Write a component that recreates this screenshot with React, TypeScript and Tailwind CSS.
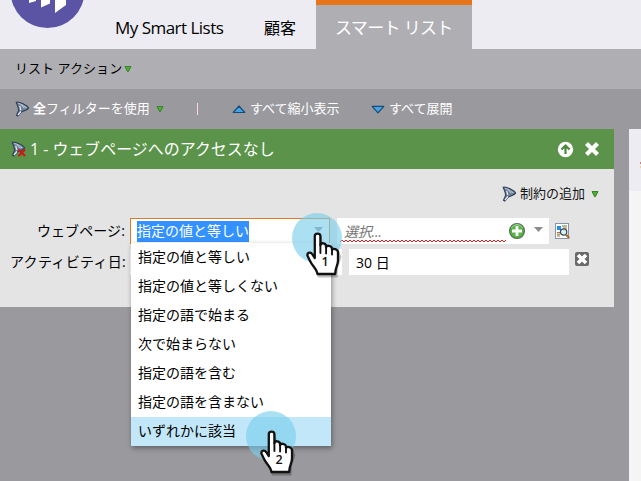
import React from "react";

const FONT = "font-['Open_Sans','Noto_Sans_CJK_JP',sans-serif]";

function Funnel({ cross = false }: { cross?: boolean }) {
  return (
    <svg width="15" height="16" viewBox="0 0 15 16" className="shrink-0">
      <path d="M1.2 1.2 C4 .2 12.5 4.5 13.6 7 C13 9 9 9.5 6.5 11 L2.8 15 L1.5 14.2 L3.6 9.5 C3.6 6 2 4 1.2 1.2Z" fill="#6c7d93" stroke="#2d3f56" strokeWidth="1.1" />
      <path d="M2.4 1.8 C6 2.3 10 5 12 7 L8 7.6 C7.5 5.5 5 4 2.4 1.8Z" fill="#c3d0e0" />
      <path d="M4.7 4.8 L5.8 9 M3 14 L6 10.5" stroke="#e5ebf3" strokeWidth="1.2" />
      <path d="M5 3.2 L9 8 M8 4.6 L10.5 7.5" stroke="#52667e" strokeWidth=".6" />
      {cross && <path d="M7.5 8.5 L14 15 M14 8.5 L7.5 15" stroke="#cf1717" strokeWidth="2.2" />}
    </svg>
  );
}

function GreenArrow() {
  return (
    <svg width="8" height="8" viewBox="0 0 8 8" className="shrink-0">
      <path d="M1 1.5 H7 L4.3 6.8 H3.7Z" fill="#4fae31" stroke="#38832a" strokeWidth="1" />
    </svg>
  );
}

function BlueArrow({ up = false }: { up?: boolean }) {
  return (
    <svg width="14" height="9" viewBox="0 0 14 9" className="shrink-0">
      <path d={up ? "M7 1 L12.8 7.5 H1.2Z" : "M1.2 1.3 H12.8 L7 7.8Z"} fill="#45a5e4" stroke="#164d78" strokeWidth="1.2" strokeLinejoin="round" />
    </svg>
  );
}

function Pointer({ n }: { n: number }) {
  return (
    <svg width="50" height="66" viewBox="0 0 50 66">
      <circle cx="25" cy="25" r="25" fill="#78cdeb" fillOpacity=".62" />
      <path d="M16.5 43 L24 37 L23 22 H28.5 L30 31 L46 37 L48.5 43 L45 54 L44.5 63.5 H25Z" fill="#000" opacity=".25" transform="translate(1 1)" />
      <path
        d="M22.8 42.5 V23.3 C22.8 19.8 28.4 19.8 28.4 23.3 V32.2 C28.8 29.5 33.7 29.6 34 32.8 V34.3 C34.5 31.9 39.5 32.3 40 35.5 V37 C40.8 35 46 35.8 46 39.5 V47.5 C46 52 43.4 53.5 43.2 61 H25.4 C25.2 56 20.5 53.5 17.8 47.5 L15.4 42.5 C15.2 39.3 18.6 38.6 20.4 41.4 L22.8 45Z"
        fill="#fff" stroke="#111" strokeWidth="2.3" strokeLinejoin="round"
      />
      <path d="M28.4 32 V40 M34.1 34 V40.5 M40 37 V41.5" stroke="#111" strokeWidth="1.9" strokeLinecap="round" />
      <text x="33" y="53.3" textAnchor="middle" fontFamily="Open Sans" fontWeight="600" fontSize="12.5" fill="#111">{n}</text>
    </svg>
  );
}

function Header() {
  return (
    <header className="flex h-[49px] bg-[#edecf3] text-[17px] leading-[24px]">
      <svg width="115" height="49" viewBox="0 0 115 49" className="shrink-0">
        <circle cx="47.5" cy="-9" r="37" fill="#5b54a4" />
        <path d="M29 0 H36 V1 L29 3Z M41 0 H50 V3.5 L41 7.5Z M55 0 H66 V5 L55 13Z" fill="#fff" />
      </svg>
      <div className="w-[149px] pt-4 whitespace-nowrap tracking-[-0.52px]">My Smart Lists</div>
      <div className="w-[52px] pt-4 text-[16px]">顧客</div>
      <div className="w-[156px] border-t-[5px] border-[#e8751a] bg-[#afaeb3] pt-[11px] pl-[19px] text-[17px] tracking-[-0.65px] whitespace-nowrap text-white">スマート リスト</div>
    </header>
  );
}

const options = ["指定の値と等しい", "指定の値と等しくない", "指定の語で始まる", "次で始まらない", "指定の語を含む", "指定の語を含まない", "いずれかに該当"];

function FilterCard() {
  return (
    <section className="h-[178px] w-[614px] bg-[#e4e4e4] text-[14px]">
      <div className="flex h-10 items-center bg-[#5a9349] pl-[11px] text-[16px] text-white">
        <Funnel cross />
        <span className="ml-1 whitespace-nowrap tracking-[-0.05px]">1 - ウェブページへのアクセスなし</span>
        <svg width="46" height="18" viewBox="0 0 46 18" className="mr-[12px] ml-auto">
          <circle cx="9.5" cy="9.5" r="7.7" fill="#fff" />
          <path d="M9.5 14 V6 M5.5 9.5 L9.5 5.6 L13.5 9.5" fill="none" stroke="#4d8740" strokeWidth="2.2" />
          <path d="M30.5 3.5 L41.5 14.5 M41.5 3.5 L30.5 14.5" stroke="#fff" strokeWidth="4.2" />
        </svg>
      </div>
      <div className="flex h-[49px] items-center pl-[502px] text-[13px] text-[#151515]">
        <Funnel />
        <span className="ml-[3px] whitespace-nowrap">制約の追加</span>
        <span className="ml-[6px] flex pt-px"><GreenArrow /></span>
      </div>
      <div className="flex h-[26px]">
        <div className="w-[130px] pr-[5px] text-right leading-[25px] tracking-[0.1px] whitespace-nowrap">ウェブページ:</div>
        <div className="relative flex w-[200px] items-center border border-[#e17b23] bg-white pl-[6px]">
          <span className="h-[21px] w-[112px] bg-[#3392ff] leading-[20px] whitespace-nowrap text-white">指定の値と等しい</span>
          <svg width="10" height="6" className="mr-[5px] mb-[3px] ml-auto"><path d="M0 0 H9 L4.5 5Z" fill="#8b9298" /></svg>
          <ul className="absolute top-[24px] left-0 z-10 w-[200px] bg-white shadow-[1px_2px_5px_rgba(0,0,0,0.4)]">
            {options.map((o, i) => (
              <li key={o} className={i === 6 ? "h-[29px] bg-[#c1e7f8] pl-[7px] leading-[27px]" : "h-[29px] pl-[7px] leading-[27px]"}>{o}</li>
            ))}
          </ul>
        </div>
        <div className="ml-[7px] flex w-[212px] items-center bg-white">
          <div className="relative h-full w-[170px] pl-[7px] text-[14px] leading-[27px] text-[#777] italic">
            <span className="tracking-[-0.2px]">選択...</span>
            <svg width="166" height="4" className="absolute bottom-[1px] left-[3px]">
              <defs><pattern id="squiggle" width="4" height="4" patternUnits="userSpaceOnUse"><path d="M0 3 L2 1 L4 3" fill="none" stroke="#e22020" /></pattern></defs>
              <rect width="166" height="4" fill="url(#squiggle)" />
            </svg>
          </div>
          <svg width="18" height="18" viewBox="0 0 18 18" className="ml-[1px]">
            <circle cx="9" cy="9" r="7.4" fill="#55b541" stroke="#58715a" strokeWidth="1.3" />
            <path d="M3.5 6 C6 1.5 12 1.5 14.5 6" stroke="#a7dda0" fill="none" />
            <path d="M9 4 V14 M4 9 H14" stroke="#fff" strokeWidth="2.8" />
          </svg>
          <svg width="10" height="6" className="mb-[2px] ml-[8px]"><path d="M0 0 H9 L4.5 5Z" fill="#8b8b8b" /></svg>
        </div>
        <svg width="16" height="18" viewBox="0 0 16 18" className="mt-1 ml-[6px]">
          <rect x=".5" y="1.5" width="13" height="15" fill="#fff" stroke="#8795a3" />
          <path d="M2 4 H6 V8 H2Z" fill="#218be7" />
          <path d="M7 4 H12" stroke="#438b3b" /><path d="M8 6 H12" stroke="#d65b2e" />
          <path d="M2 10.5 H5 M2 14 H5" stroke="#d65b2e" /><path d="M2 12.2 H5" stroke="#438b3b" />
          <circle cx="8.6" cy="10" r="3.2" fill="#d7eef9" stroke="#39434d" strokeWidth="1.2" />
          <path d="M10.9 12.5 L14.3 16" stroke="#a46c29" strokeWidth="2" />
        </svg>
      </div>
      <div className="mt-[5px] flex h-[26px]">
        <div className="w-[130px] pr-[4px] text-right leading-[25px] tracking-[0.3px] whitespace-nowrap">アクティビティ日:</div>
        <div className="w-[212px] bg-white" />
        <div className="ml-[7px] w-[220px] bg-white pl-[7px] leading-[27px]">30 日</div>
        <svg width="14" height="14" viewBox="0 0 14 14" className="mt-[3px] ml-[6px]">
          <rect width="14" height="14" rx="2" fill="#69696b" />
          <path d="M3 3 L11 11 M11 3 L3 11" stroke="#fff" strokeWidth="3.6" />
        </svg>
      </div>
    </section>
  );
}

export default function App() {
  return (
    <div className={`${FONT} relative h-[481px] w-[641px] overflow-hidden bg-[#9a999e] text-black`}>
      <Header />
      <div className="flex h-10 items-center bg-[#afaeb3] pl-[15px] text-[13px]">
        <span className="mr-[2px] whitespace-nowrap tracking-[0.05px]">リスト アクション</span><GreenArrow />
      </div>
      <div className="flex h-10 items-center pl-[15px] text-[13px] whitespace-nowrap text-white">
        <Funnel />
        <span className="ml-[3px] w-[117px]"><b>全</b>フィルターを使用</span>
        <span className="ml-[6px] flex"><GreenArrow /></span>
        <span className="ml-[33px] h-3 w-px bg-[#ffd5e0]" />
        <span className="ml-[34px] flex"><BlueArrow up /></span>
        <span className="ml-[4px] w-[91px]">すべて縮小表示</span>
        <span className="ml-[30px] flex"><BlueArrow /></span>
        <span className="ml-[4px]">すべて展開</span>
      </div>
      <main className="flex h-[352px]">
        <FilterCard />
        <aside className="ml-[15px] w-[12px] bg-[#f5f5f6]">
          <div className="flex h-[62px] flex-col items-end bg-[#edecf3] pt-[33px]">
            <span className="h-[2px] w-px bg-[#c98080]" />
            <span className="mt-[2px] h-[2px] w-px bg-[#f0cf9c]" />
          </div>
        </aside>
      </main>
      <div className="absolute top-[213px] left-[292px] z-20"><Pointer n={1} /></div>
      <div className="absolute top-[411px] left-[246px] z-20"><Pointer n={2} /></div>
    </div>
  );
}
